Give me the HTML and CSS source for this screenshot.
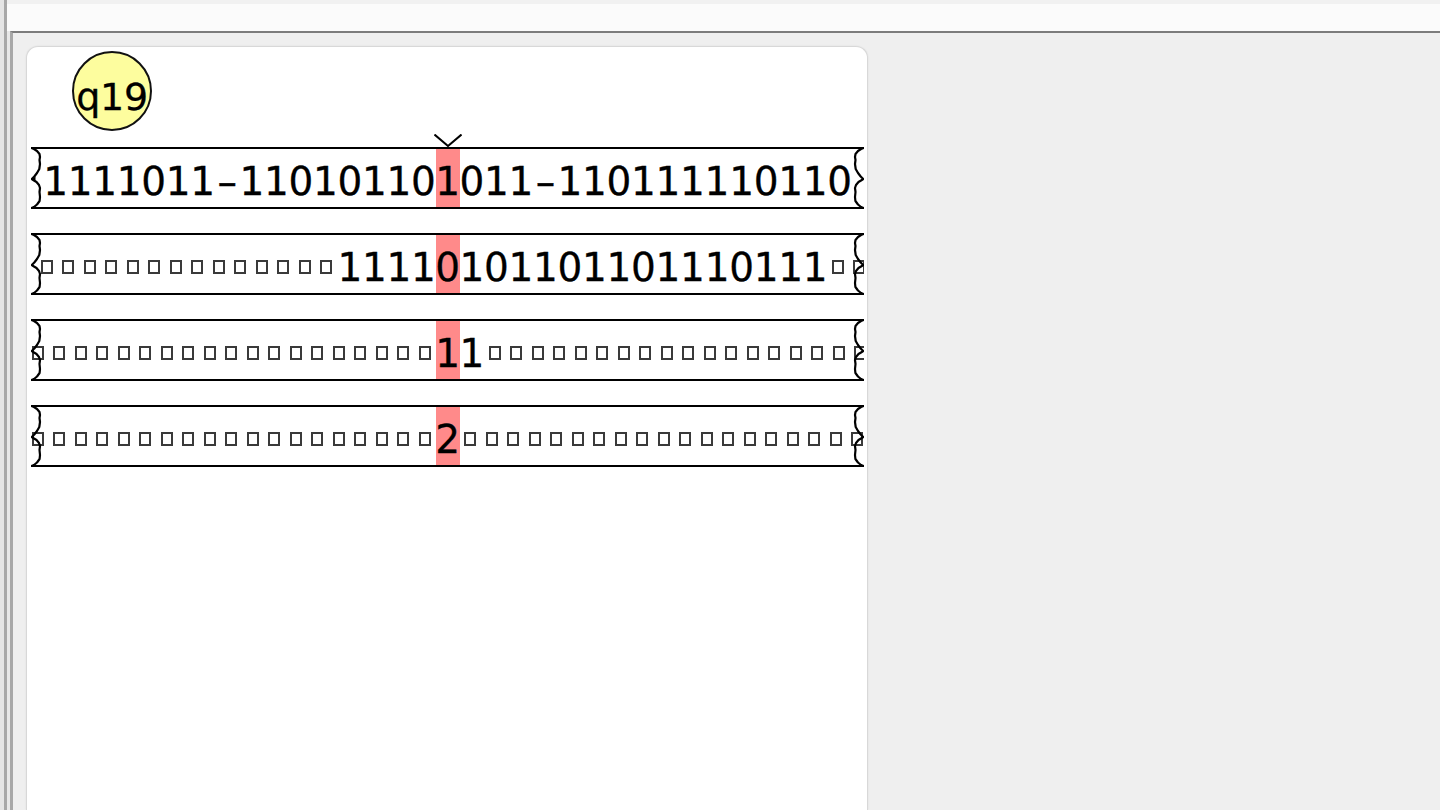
FILE: index.html
```html
<!DOCTYPE html>
<html lang="en">
<head>
<meta charset="utf-8">
<title>Turing machine</title>
<link rel="stylesheet" href="styles.css">
</head>
<body>
<div class="app">
  <div class="rail"></div>
  <div class="rail-line"></div>
  <div class="main">
    <div class="toolbar"></div>
    <div class="workspace">
      <div class="panel">
        <div class="state">q19</div>
        <div class="tapes">
          <div class="tape">
            <svg class="cap cap-l" viewBox="0 0 11 62" width="11" height="62"><path d="M0.5 1 L3 2 L6 4 L8.5 7 L9 10 L8.5 13 L9 17 L8.3 22 L6 26 L3.3 29.5 L0.8 32 L3 33.5 L5.5 35 L8 38 L9 41 L8.5 45 L9 50 L8.6 54 L6 57.5 L3 60 L0.5 61"/><path class="tip" d="M1 32 L4.5 29.5 L4.5 34.5 Z"/></svg>
            <div class="side left"><span class="run">1111011<span class="dash">–</span>11010110</span></div>
            <div class="head">1<svg class="pointer" viewBox="0 0 28 13" width="28" height="13"><path d="M0.5 0.5 L14 12 L27.5 0.5"/></svg></div>
            <div class="side right"><span class="run">011<span class="dash">–</span>110111110110</span></div>
            <svg class="cap cap-r" viewBox="0 0 11 62" width="11" height="62"><path d="M0.5 1 L3 2 L6 4 L8.5 7 L9 10 L8.5 13 L9 17 L8.3 22 L6 26 L3.3 29.5 L0.8 32 L3 33.5 L5.5 35 L8 38 L9 41 L8.5 45 L9 50 L8.6 54 L6 57.5 L3 60 L0.5 61"/></svg>
          </div>
          <div class="tape">
            <svg class="cap cap-l" viewBox="0 0 11 62" width="11" height="62"><path d="M0.5 1 L3 2 L6 4 L8.5 7 L9 10 L8.5 13 L9 17 L8.3 22 L6 26 L3.3 29.5 L0.8 32 L3 33.5 L5.5 35 L8 38 L9 41 L8.5 45 L9 50 L8.6 54 L6 57.5 L3 60 L0.5 61"/></svg>
            <div class="side left"><span class="run"><i class="b"></i><i class="b"></i><i class="b"></i><i class="b"></i><i class="b"></i><i class="b"></i><i class="b"></i><i class="b"></i><i class="b"></i><i class="b"></i><i class="b"></i><i class="b"></i><i class="b"></i><i class="b"></i><i class="b"></i><i class="b"></i><i class="b"></i>1111</span></div>
            <div class="head">0</div>
            <div class="side right"><span class="run">101101101110111<i class="b"></i><i class="b"></i><i class="b"></i></span></div>
            <svg class="cap cap-r" viewBox="0 0 11 62" width="11" height="62"><path d="M0.5 1 L3 2 L6 4 L8.5 7 L9 10 L8.5 13 L9 17 L8.3 22 L6 26 L3.3 29.5 L0.8 32 L3 33.5 L5.5 35 L8 38 L9 41 L8.5 45 L9 50 L8.6 54 L6 57.5 L3 60 L0.5 61"/></svg>
          </div>
          <div class="tape">
            <svg class="cap cap-l" viewBox="0 0 11 62" width="11" height="62"><path d="M0.5 1 L3 2 L6 4 L8.5 7 L9 10 L8.5 13 L9 17 L8.3 22 L6 26 L3.3 29.5 L0.8 32 L3 33.5 L5.5 35 L8 38 L9 41 L8.5 45 L9 50 L8.6 54 L6 57.5 L3 60 L0.5 61"/></svg>
            <div class="side left"><span class="run"><i class="b"></i><i class="b"></i><i class="b"></i><i class="b"></i><i class="b"></i><i class="b"></i><i class="b"></i><i class="b"></i><i class="b"></i><i class="b"></i><i class="b"></i><i class="b"></i><i class="b"></i><i class="b"></i><i class="b"></i><i class="b"></i><i class="b"></i><i class="b"></i><i class="b"></i><i class="b"></i><i class="b"></i><i class="b"></i></span></div>
            <div class="head">1</div>
            <div class="side right"><span class="run">1<i class="b"></i><i class="b"></i><i class="b"></i><i class="b"></i><i class="b"></i><i class="b"></i><i class="b"></i><i class="b"></i><i class="b"></i><i class="b"></i><i class="b"></i><i class="b"></i><i class="b"></i><i class="b"></i><i class="b"></i><i class="b"></i><i class="b"></i><i class="b"></i><i class="b"></i><i class="b"></i></span></div>
            <svg class="cap cap-r" viewBox="0 0 11 62" width="11" height="62"><path d="M0.5 1 L3 2 L6 4 L8.5 7 L9 10 L8.5 13 L9 17 L8.3 22 L6 26 L3.3 29.5 L0.8 32 L3 33.5 L5.5 35 L8 38 L9 41 L8.5 45 L9 50 L8.6 54 L6 57.5 L3 60 L0.5 61"/></svg>
          </div>
          <div class="tape">
            <svg class="cap cap-l" viewBox="0 0 11 62" width="11" height="62"><path d="M0.5 1 L3 2 L6 4 L8.5 7 L9 10 L8.5 13 L9 17 L8.3 22 L6 26 L3.3 29.5 L0.8 32 L3 33.5 L5.5 35 L8 38 L9 41 L8.5 45 L9 50 L8.6 54 L6 57.5 L3 60 L0.5 61"/></svg>
            <div class="side left"><span class="run"><i class="b"></i><i class="b"></i><i class="b"></i><i class="b"></i><i class="b"></i><i class="b"></i><i class="b"></i><i class="b"></i><i class="b"></i><i class="b"></i><i class="b"></i><i class="b"></i><i class="b"></i><i class="b"></i><i class="b"></i><i class="b"></i><i class="b"></i><i class="b"></i><i class="b"></i><i class="b"></i><i class="b"></i><i class="b"></i></span></div>
            <div class="head">2</div>
            <div class="side right"><span class="run"><i class="b"></i><i class="b"></i><i class="b"></i><i class="b"></i><i class="b"></i><i class="b"></i><i class="b"></i><i class="b"></i><i class="b"></i><i class="b"></i><i class="b"></i><i class="b"></i><i class="b"></i><i class="b"></i><i class="b"></i><i class="b"></i><i class="b"></i><i class="b"></i><i class="b"></i><i class="b"></i><i class="b"></i><i class="b"></i></span></div>
            <svg class="cap cap-r" viewBox="0 0 11 62" width="11" height="62"><path d="M0.5 1 L3 2 L6 4 L8.5 7 L9 10 L8.5 13 L9 17 L8.3 22 L6 26 L3.3 29.5 L0.8 32 L3 33.5 L5.5 35 L8 38 L9 41 L8.5 45 L9 50 L8.6 54 L6 57.5 L3 60 L0.5 61"/></svg>
          </div>
        </div>
      </div>
    </div>
  </div>
</div>
</body>
</html>
```

FILE: styles.css
```css
html, body {
  margin: 0;
  padding: 0;
}

body {
  background: #efefef;
  font-family: "DejaVu Sans", "Liberation Sans", sans-serif;
  color: #000;
}

.app {
  display: flex;
  height: 810px;
  overflow: hidden;
}

.rail {
  width: 4px;
  background: #e5e5e5;
}

.rail-line {
  width: 3px;
  background: #a8a8a8;
}

.main {
  flex: 1;
  display: flex;
  flex-direction: column;
  background: #e8e8e8;
}

.toolbar {
  height: 27px;
  border-top: 4px solid #f1f1f1;
  background: #fbfbfb;
}

.workspace {
  flex: 1;
  display: flex;
  margin-left: 3px;
  border-left: 3px solid #a8a8a8;
  border-top: 2px solid #7c7c7c;
  background: #efefef;
  padding-top: 13px;
}

.panel {
  width: 842px;
  box-sizing: border-box;
  margin-left: 13px;
  padding: 4px 3px 0 4px;
  background: #fff;
  border: 1px solid #d8d8d8;
  border-bottom: none;
  border-radius: 12px 12px 0 0;
  box-shadow: 0 0 2px rgba(0, 0, 0, 0.08);
}

.state {
  width: 80px;
  height: 80px;
  box-sizing: border-box;
  margin-left: 41px;
  border: 2px solid #111;
  border-radius: 50%;
  background: #fdfd9e;
  text-align: center;
  font-size: 38px;
  line-height: 44px;
  padding-top: 22px;
  letter-spacing: -0.3px;
  -webkit-text-stroke: 0.3px #000;
}

.tapes {
  margin-top: 16px;
  display: flex;
  flex-direction: column;
  gap: 24px;
}

.tape {
  position: relative;
  display: flex;
  height: 58px;
  border-top: 2px solid #000;
  border-bottom: 2px solid #000;
  font-size: 39px;
  letter-spacing: -0.3px;
  -webkit-text-stroke: 0.3px #000;
}

.side {
  flex: 1;
  min-width: 0;
  display: flex;
  overflow: hidden;
  white-space: nowrap;
  box-sizing: border-box;
  height: 58px;
  padding-top: 8px;
  line-height: 50px;
}

.side.left {
  justify-content: flex-end;
}

.run {
  flex-shrink: 0;
}

.dash {
  display: inline-block;
  width: 24.5px;
  text-align: center;
}

.b {
  display: inline-block;
  box-sizing: border-box;
  width: 12px;
  height: 14px;
  margin: 0 5px 0 4.5px;
  border: 2px solid #3a3a3a;
  vertical-align: 7px;
}

.head {
  position: relative;
  flex: none;
  width: 24px;
  box-sizing: border-box;
  height: 58px;
  padding-top: 8px;
  line-height: 50px;
  background: #ff8a8a;
  text-align: center;
  white-space: nowrap;
  display: flex;
  justify-content: center;
}

.pointer {
  position: absolute;
  left: -2px;
  top: -15px;
  fill: none;
  stroke: #000;
  stroke-width: 2;
}

.cap {
  position: absolute;
  top: -2px;
  fill: none;
  stroke: #000;
  stroke-width: 2.2;
  stroke-linejoin: round;
}

.cap .tip {
  fill: #000;
  stroke: none;
}

.cap-l {
  left: 0;
}

.cap-r {
  right: 0;
  transform: scaleX(-1);
}
```
